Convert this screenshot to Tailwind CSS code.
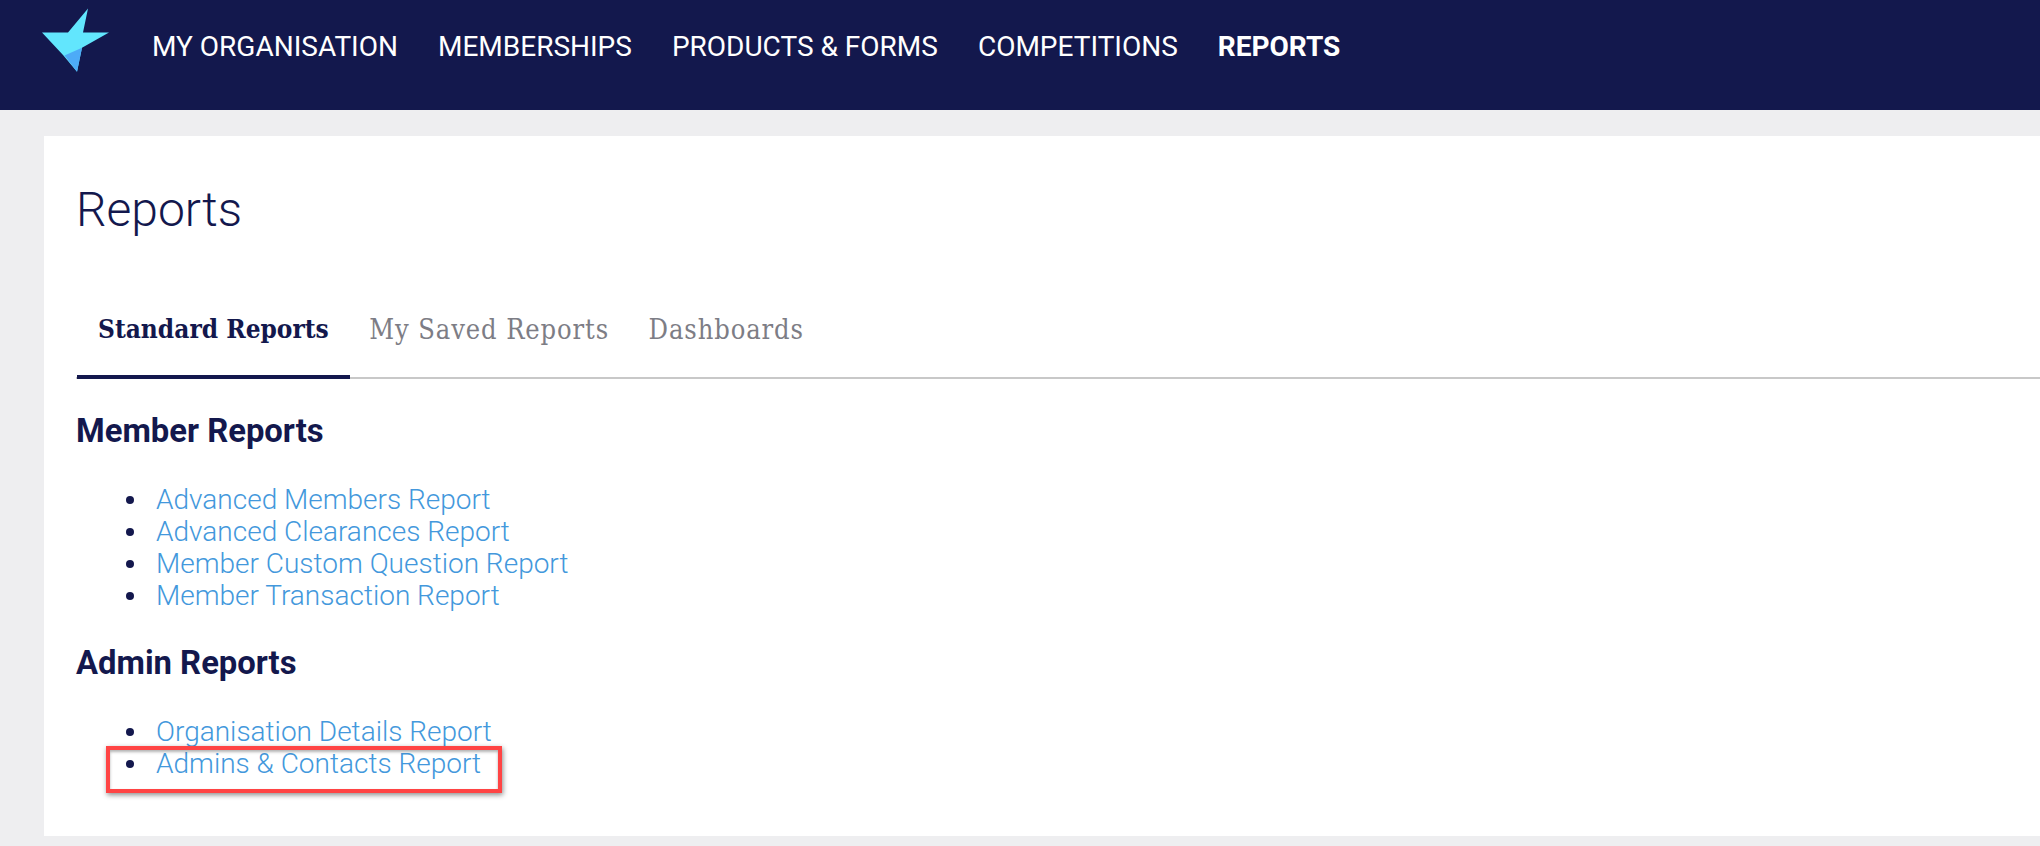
<!DOCTYPE html>
<html><head><meta charset="utf-8"><script src="https://cdn.jsdelivr.net/npm/@tailwindcss/browser@4"></script></head>
<body class="bg-[#eeeef0] font-['Roboto',sans-serif] text-[#13184d] h-[846px] overflow-hidden">
<header class="h-[110px] bg-[#13184d] flex items-start">
  <svg class="ml-[42px] mt-[8px] shrink-0" width="68" height="64" viewBox="42 8 68 64"><path fill="#62e6fd" d="M42 32.5H68L88 8.5 83 32.5H109L82 47.7 77 71.7 63 55Z"/><path fill="#4dabf7" d="M64.5 55.5 82 47.7 77 71.7Z"/></svg>
  <nav class="ml-[42px] mt-[27px] flex gap-[40px] text-[28px] leading-[40px] text-white">
    <a>MY ORGANISATION</a><a>MEMBERSHIPS</a><a>PRODUCTS &amp; FORMS</a><a>COMPETITIONS</a><a class="font-bold">REPORTS</a>
  </nav>
</header>
<main class="relative ml-[44px] mt-[26px] h-[700px] bg-white pl-[32px]">
  <h1 class="pt-[42px] text-[48px] leading-[64px] font-light">Reports</h1>
  <div class="mt-[38px] pl-[1px] flex h-[99px] border-b-2 border-[#c8c8c8] font-['DejaVu_Serif_Condensed','DejaVu_Serif',serif] text-[27px] tracking-[0.9px] text-[#7d7d85]">
    <a class="px-[21px] pt-[30px] h-[99px] border-b-4 border-[#13184d] font-bold text-[#13184d] text-[26px] tracking-normal">Standard Reports</a>
    <a class="pl-[19.5px] pr-[19.5px] pt-[30px]">My Saved Reports</a>
    <a class="px-[20px] pt-[30px]">Dashboards</a>
  </div>
  <h2 class="mt-[34px] text-[32.8px] leading-[36px] font-bold">Member Reports</h2>
  <ul class="mt-[35px] pl-[50px] text-[28px] leading-[32px] font-light text-[#4398dc]">
    <li class="flex items-center gap-[22px]"><span class="size-[8px] rounded-full bg-[#13184d]"></span>Advanced Members Report</li>
    <li class="flex items-center gap-[22px]"><span class="size-[8px] rounded-full bg-[#13184d]"></span>Advanced Clearances Report</li>
    <li class="flex items-center gap-[22px]"><span class="size-[8px] rounded-full bg-[#13184d]"></span>Member Custom Question Report</li>
    <li class="flex items-center gap-[22px]"><span class="size-[8px] rounded-full bg-[#13184d]"></span>Member Transaction Report</li>
  </ul>
  <h2 class="mt-[33px] text-[32.8px] leading-[36px] font-bold">Admin Reports</h2>
  <ul class="mt-[35px] pl-[50px] text-[28px] leading-[32px] font-light text-[#4398dc]">
    <li class="flex items-center gap-[22px]"><span class="size-[8px] rounded-full bg-[#13184d]"></span>Organisation Details Report</li>
    <li class="flex items-center gap-[22px]"><span class="size-[8px] rounded-full bg-[#13184d]"></span>Admins &amp; Contacts Report</li>
  </ul>
  <div class="absolute left-[62px] top-[610px] w-[396px] h-[47px] border-[4px] border-[#ff4444] shadow-[1px_2px_5px_rgba(0,0,0,0.45),inset_0_2px_3px_rgba(0,0,0,0.3)]"></div>
</main>
</body></html>
